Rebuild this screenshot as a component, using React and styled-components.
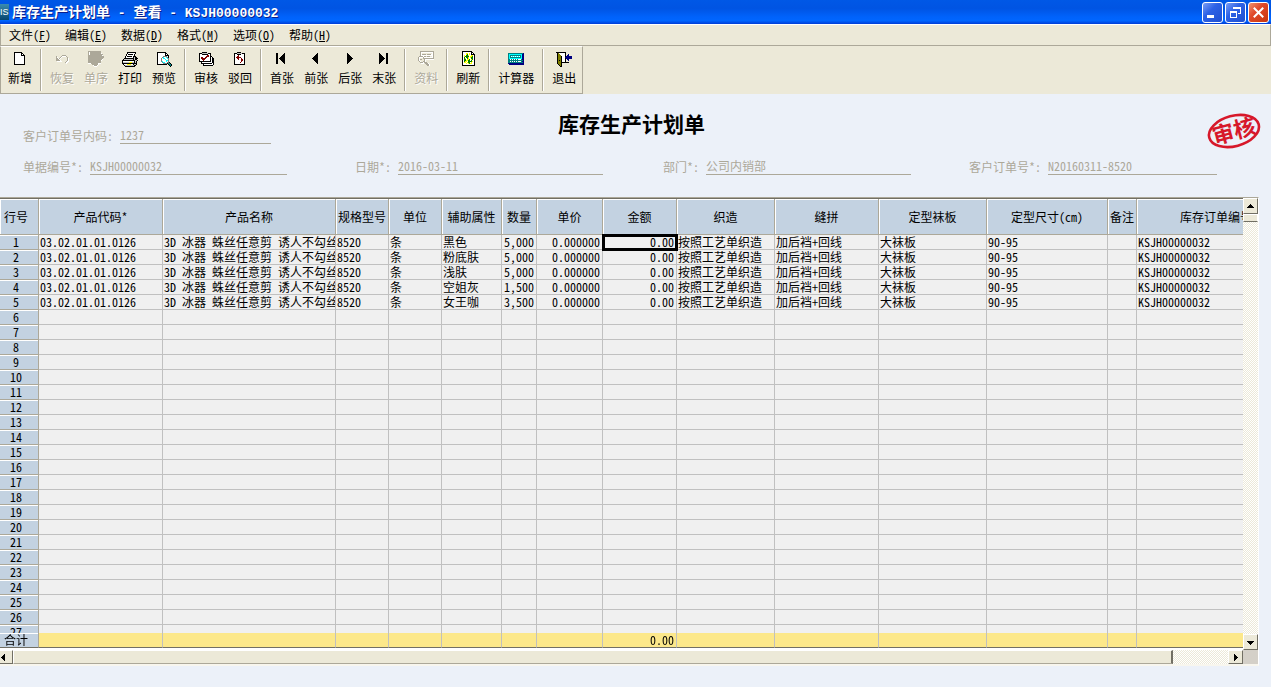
import React from 'react';
import styled, { createGlobalStyle } from 'styled-components';

const GlobalStyle = createGlobalStyle`
    * {
        box-sizing: border-box;
    }
    body {
        margin: 0;
        background: #ecf1f9;
        color: #000;
        font-family: "Noto Sans Mono CJK SC", "Noto Sans CJK SC", "Liberation Mono", monospace;
        font-size: 12px;
        line-height: 15px;
    }
    button, input {
        font: inherit;
        color: inherit;
        padding: 0;
        border: 0;
        background: none;
    }
`;

// Colours used by the pixel icons, one letter each
const palette = {
    k: '#000000',
    w: '#ffffff',
    g: '#aca899',
    d: '#808080',
    s: '#c0c0c0',
    r: '#800000',
    y: '#ffff00',
    o: '#808000',
    t: '#008080',
    c: '#00ffff',
    n: '#008000',
    b: '#000080',
};

const icons = {
    new: [
        '................',
        '..kkkkkkkk......',
        '..kwwwwwwkk.....',
        '..kwwwwwwkwk....',
        '..kwwwwwwkkkk...',
        '..kwwwwwwwwwk...',
        '..kwwwwwwwwwk...',
        '..kwwwwwwwwwk...',
        '..kwwwwwwwwwk...',
        '..kwwwwwwwwwk...',
        '..kwwwwwwwwwk...',
        '..kwwwwwwwwwk...',
        '..kwwwwwwwwwk...',
        '..kkkkkkkkkkk...',
    ],
    undo: [
        '................',
        '................',
        '................',
        '................',
        '........gggg....',
        '..g....gwwwwg...',
        '..gw..gw.....g..',
        '..ggwgw......gw.',
        '..gggw.......gw.',
        '..ggggw......gw.',
        '...wwwww....gww.',
        '...........gww..',
        '............w...',
    ],
    order: [
        'ggggggggggggg...',
        'gwggggggggggg...',
        'gwgggggggggggw..',
        'gwggggggggggggg.',
        'ggggggggggggggw.',
        'gggggggggggggggg',
        'gggggggggggggggg',
        'ggggggggggggggg.',
        'ggggggggggggggw.',
        'gggggggggggggw..',
        'ggggggggggggg...',
        'ggggggggggggg...',
        'wwwgggggggwww...',
        '....ggggggw.....',
        '.....wgggw......',
        '......www.......',
    ],
    print: [
        '................',
        '.....kkkkkkkkk..',
        '.....kwwwwwwwk..',
        '....kwkkkkkwk...',
        '....kwwwwwwwk...',
        '...kwkkkkkwkkk..',
        '...kwwwwwwwkskk.',
        '..kkkkkkkkkkskkk',
        '.kssssssssskskk.',
        'kkkkkkkkkkkkkssk',
        'kwwwwwwwwwwwksk.',
        'kssssssyyyssksk.',
        'kkkkkkkkkkkkkkk.',
        '.kwwwyyyywwkssk.',
        '..kssssssssskk..',
        '...kkkkkkkkkk...',
    ],
    preview: [
        '................',
        '.kkkkkkkkk......',
        '.kwwwwwwwkk.....',
        '.kwwwwwwwkwk....',
        '.kwwwwwwwkkkk...',
        '.kwwwwwddddwk...',
        '.kwwwwdcwwcdk...',
        '.kwwwdwccwwcd...',
        '.kwwwdwwwcwwd...',
        '.kwwwdwwwwccd...',
        '.kwwwdcwwwcwd...',
        '.kwwwwdccwwddk..',
        '.kwwwwwddddkttk.',
        '.kkkkkkkkkk.kttk',
        '.............ktk',
        '..............k.',
    ],
    audit: [
        '................',
        '....kkkkk.......',
        '.kkksssssskkk...',
        '.kwwkkkkkkwwk...',
        '.kwwwwwwwrrwk...',
        '.kwwwwwwrrrwkk..',
        '.kwrrwwrrwwwkwk.',
        '.kwrrrrrwwwwkwkk',
        '.kwwrrrwwwwwkwkk',
        '.kwwwrwwwwwwkwkk',
        '.kkkkkkkkkkkkwkk',
        '...kwwwwwwwwwwkk',
        '...kkkkkkkkkkkwk',
        '.....kwwwwwwwwwk',
        '.....kkkkkkkkkk.',
    ],
    reject: [
        '................',
        '.....kkkk.......',
        '..kkkssssskkk...',
        '..kwwkkkkwwwk...',
        '..kwwwrwwwwwk...',
        '..kwwrrwwwwwk...',
        '..kwrrrrrwwwk...',
        '..kwwrrwwrwwk...',
        '..kwwwrwwrrwk...',
        '..kwwwwwwrrwk...',
        '..kwwwwwwrwwk...',
        '..kwwwwwrwwwk...',
        '..kwwwwwwwwwk...',
        '..kkkkkkkkkkk...',
    ],
    first: [
        '................',
        '................',
        '..kk......k.....',
        '..kk.....kk.....',
        '..kk....kkk.....',
        '..kk...kkkk.....',
        '..kk..kkkkk.....',
        '..kk.kkkkkk.....',
        '..kk..kkkkk.....',
        '..kk...kkkk.....',
        '..kk....kkk.....',
        '..kk.....kk.....',
        '..kk......k.....',
    ],
    prev: [
        '................',
        '................',
        '.........k......',
        '........kk......',
        '.......kkk......',
        '......kkkk......',
        '.....kkkkk......',
        '....kkkkkk......',
        '.....kkkkk......',
        '......kkkk......',
        '.......kkk......',
        '........kk......',
        '.........k......',
    ],
    next: [
        '................',
        '................',
        '.....k..........',
        '.....kk.........',
        '.....kkk........',
        '.....kkkk.......',
        '.....kkkkk......',
        '.....kkkkkk.....',
        '.....kkkkk......',
        '.....kkkk.......',
        '.....kkk........',
        '.....kk.........',
        '.....k..........',
    ],
    last: [
        '................',
        '................',
        '...k......kk....',
        '...kk.....kk....',
        '...kkk....kk....',
        '...kkkk...kk....',
        '...kkkkk..kk....',
        '...kkkkkk.kk....',
        '...kkkkk..kk....',
        '...kkkk...kk....',
        '...kkk....kk....',
        '...kk.....kk....',
        '...k......kk....',
    ],
    data: [
        '..gggggggggggggg',
        '..gwwwwwwwwwwwwg',
        '..gw..........wg',
        '..gwgggg.ggggwwg',
        '..gwwwwwwwwwwwwg',
        '.ggggwgg.ggg..wg',
        'gwwwwgwwwwwwwwwg',
        'gw...ggggggggggg',
        'gwgg..gwwwwwwwww',
        'gw....gw........',
        '.gw..ggw........',
        '..gggwggg.......',
        '...www.gggw.....',
        '........gggw....',
        '.........ggw....',
    ],
    refresh: [
        '..kkkkkkkkkk....',
        '..kwwwwwwwwkk...',
        '..kwwwyywywkwk..',
        '..kwwwynwywkkkk.',
        '..kwywnnywwyywk.',
        '..kwynnnnwyynwk.',
        '..kwnwnnywynnwk.',
        '..kwnywnywwnnwk.',
        '..kwnnwyynwynwk.',
        '..kwnnyynnwnwwk.',
        '..kwnyywnnnnywk.',
        '..kwyywynnwywwk.',
        '..kwwwywynyywwk.',
        '..kwwwwwwwwwwwk.',
        '..kkkkkkkkkkkkk.',
    ],
    calc: [
        '................',
        '................',
        'tttttttttttttttb',
        'tcccccccccccccbb',
        'tctttttttttttcbb',
        'tctwcwcwcwcwtcbb',
        'tctttttttttttcbb',
        'tcccccccccccccbb',
        'ttwtwtwtwtwwwtbb',
        'tttttttttttttttb',
        'ttwtwtwtwtwwwtbb',
        'tttttttttttttttb',
        'bbbbbbbbbbbbbbbb',
        '.bbbbbbbbbbbbbbb',
    ],
    exit: [
        '................',
        'kkkkkkkkkk......',
        '.kowwwwwwk......',
        '.koowwwwwk..b...',
        '.kooowwwwk.bb...',
        '.koookwwwkbbbbbb',
        '.koookwwwbbbbbbb',
        '.koookwwwkbbbbbb',
        '.koookwwwk.bb...',
        '.kokokwwwk..b...',
        '.koookwwwk......',
        '.koookkkkkkkk...',
        '.koook..........',
        '..kook..........',
        '...kok..........',
        '....kk..........',
    ],
};

const menus = [
    ['文件', 'F'],
    ['编辑', 'E'],
    ['数据', 'D'],
    ['格式', 'M'],
    ['选项', 'O'],
    ['帮助', 'H'],
];

const toolGroups = [
    [['new', '新增']],
    [['undo', '恢复', true], ['order', '单序', true], ['print', '打印'], ['preview', '预览']],
    [['audit', '审核'], ['reject', '驳回']],
    [['first', '首张'], ['prev', '前张'], ['next', '后张'], ['last', '末张']],
    [['data', '资料', true]],
    [['refresh', '刷新']],
    [['calc', '计算器']],
    [['exit', '退出']],
];

const columns = [
    { title: '产品代码*', width: 124 },
    { title: '产品名称', width: 173, clip: true },
    { title: '规格型号', width: 53 },
    { title: '单位', width: 53 },
    { title: '辅助属性', width: 60 },
    { title: '数量', width: 35, right: true },
    { title: '单价', width: 66, right: true },
    { title: '金额', width: 74, right: true },
    { title: '织造', width: 98 },
    { title: '缝拼', width: 104 },
    { title: '定型袜板', width: 108 },
    { title: '定型尺寸(cm)', width: 121 },
    { title: '备注', width: 29 },
    { title: '库存订单编号', width: 159 },
];

const makeRow = (color, count) => [
    '03.02.01.01.0126',
    '3D 冰器 蛛丝任意剪 诱人不勾丝',
    '8520',
    '条',
    color,
    count,
    '0.000000',
    '0.00',
    '按照工艺单织造',
    '加后裆+回线',
    '大袜板',
    '90-95',
    '',
    'KSJH00000032',
];

const rows = [
    makeRow('黑色', '5,000'),
    makeRow('粉底肤', '5,000'),
    makeRow('浅肤', '5,000'),
    makeRow('空姐灰', '1,500'),
    makeRow('女王咖', '3,500'),
];

const ROW_COUNT = 27;
const AMOUNT = 7;

const PixelIcon = ({ name }) => (
    <svg width="16" height="16" viewBox="0 0 16 16" shapeRendering="crispEdges" aria-hidden="true">
        {icons[name].map((line, y) =>
            line.split('').map((ch, x) =>
                ch === '.' ? null : <rect key={x + '-' + y} x={x} y={y} width="1" height="1" fill={palette[ch]} />
            )
        )}
    </svg>
);

const Arrow = ({ points }) => (
    <svg width="7" height="7" viewBox="0 0 7 7" shapeRendering="crispEdges" aria-hidden="true">
        <polygon points={points} fill="#000" />
    </svg>
);

const TitleBar = () => (
    <TitleBarBox>
        <AppIcon>IS</AppIcon>
        <Caption>
            库存生产计划单<CaptionCode> - </CaptionCode>查看<CaptionCode> - KSJH00000032</CaptionCode>
        </Caption>
        <WindowButton aria-label="最小化">
            <svg width="19" height="19" shapeRendering="crispEdges">
                <rect x="4" y="12" width="7" height="3" fill="#fff" />
            </svg>
        </WindowButton>
        <WindowButton aria-label="还原">
            <svg width="19" height="19" shapeRendering="crispEdges" fill="none" stroke="#fff">
                <path d="M7 4.5h8M7.5 6V4M14.5 4v7M7 5.5h8M12 10.5h3M4 8.5h7M4 9.5h7M4.5 8v7M10.5 8v7M4 14.5h7" />
            </svg>
        </WindowButton>
        <WindowButton $close aria-label="关闭">
            <svg width="19" height="19" stroke="#fff" strokeWidth="2" strokeLinecap="square">
                <path d="M5.5 5.5l8 8M13.5 5.5l-8 8" />
            </svg>
        </WindowButton>
    </TitleBarBox>
);

const Field = ({ id, label, value, gap }) => (
    <FieldBox $gap={gap}>
        <label htmlFor={id}>{label}:</label>
        <FieldInput id={id} defaultValue={value} readOnly />
    </FieldBox>
);

const Grid = () => (
    <Table>
        <colgroup>
            <col width="39" />
            {columns.map((c) => <col key={c.title} width={c.width} />)}
        </colgroup>
        <thead>
            <tr>
                <HeadCell $index scope="col">行号</HeadCell>
                {columns.map((c) => <HeadCell key={c.title} scope="col">{c.title}</HeadCell>)}
            </tr>
        </thead>
        <tbody>
            {Array.from({ length: ROW_COUNT }, (_, r) => (
                <tr key={r}>
                    <IndexCell scope="row">{r + 1}</IndexCell>
                    {columns.map((c, i) => (
                        <Cell key={c.title} $right={c.right} $clip={c.clip} $selected={r === 0 && i === AMOUNT}>
                            {rows[r] ? rows[r][i] : ''}
                        </Cell>
                    ))}
                </tr>
            ))}
        </tbody>
        <tfoot>
            <tr>
                <TotalHead scope="row">合计</TotalHead>
                {columns.map((c, i) => (
                    <TotalCell key={c.title} $right={c.right}>{i === AMOUNT ? '0.00' : ''}</TotalCell>
                ))}
            </tr>
        </tfoot>
    </Table>
);

const App = () => (
    <Window>
        <GlobalStyle />
        <TitleBar />
        <MenuBar>
            {menus.map(([text, key]) => (
                <MenuButton key={key}>{text}(<u>{key}</u>)</MenuButton>
            ))}
        </MenuBar>
        <ToolStrip>
            <ToolBar>
                {toolGroups.map((group, i) => (
                    <ToolGroup key={i}>
                        {group.map(([icon, text, disabled]) => (
                            <ToolButton key={icon} disabled={disabled}>
                                <PixelIcon name={icon} />
                                {text}
                            </ToolButton>
                        ))}
                    </ToolGroup>
                ))}
            </ToolBar>
        </ToolStrip>
        <Form>
            <TopRow>
                <Field id="inner" label="客户订单号内码" value="1237" gap={0} />
                <FormTitle>库存生产计划单</FormTitle>
                <Stamp viewBox="0 0 56 40" role="img" aria-label="审核">
                    <g transform="rotate(-15 28 20)">
                        <ellipse cx="28" cy="20" rx="25.6" ry="15.2" fill="none" stroke="#d7182a" strokeWidth="2.6" />
                        <text x="28" y="28" textAnchor="middle">审核</text>
                    </g>
                </Stamp>
            </TopRow>
            <FieldRow>
                <Field id="bill" label="单据编号*" value="KSJH00000032" gap={68} />
                <Field id="date" label="日期*" value="2016-03-11" gap={60} />
                <Field id="dept" label="部门*" value="公司内销部" gap={58} />
                <Field id="order" label="客户订单号*" value="N20160311-8520" gap={54} />
            </FieldRow>
        </Form>
        <GridFrame>
            <GridView>
                <Grid />
            </GridView>
            <VScroll>
                <ScrollButton aria-label="向上"><Arrow points="0,5 7,5 3.5,1" /></ScrollButton>
                <VThumb />
                <Track />
                <ScrollButton aria-label="向下"><Arrow points="0,2 7,2 3.5,6" /></ScrollButton>
            </VScroll>
            <HScroll>
                <ScrollButton $left aria-label="向左"><Arrow points="5,0 5,7 1,3.5" /></ScrollButton>
                <HThumb />
                <Track />
                <ScrollButton aria-label="向右"><Arrow points="2,0 2,7 6,3.5" /></ScrollButton>
            </HScroll>
            <Corner />
        </GridFrame>
    </Window>
);

export default App;

const Window = styled.div`
    display: flex;
    flex-direction: column;
    height: 100vh;
    overflow: hidden;
`;

// Title bar
const TitleBarBox = styled.header`
    display: flex;
    align-items: center;
    gap: 2px;
    height: 24px;
    padding-right: 2px;
    color: #fff;
    background: linear-gradient(#0058e6 0, #0054e3 35%, #0062fb 70%, #0066ff 86%, #003dd7 100%);
`;

const AppIcon = styled.span`
    width: 9px;
    height: 16px;
    font-family: "Liberation Sans", sans-serif;
    font-size: 9px;
    line-height: 16px;
    background: linear-gradient(#3b8cb0, #07456e);
`;

const Caption = styled.h1`
    flex: 1;
    margin: 0;
    padding-left: 1px;
    font-size: 14px;
    font-weight: 700;
    line-height: 20px;
    text-shadow: 1px 1px #0a1f8c;
    white-space: pre;
`;

const CaptionCode = styled.span`
    font-family: "Liberation Mono", monospace;
    font-size: 13px;
`;

const WindowButton = styled.button`
    width: 21px;
    height: 21px;
    border: 1px solid #fff;
    border-radius: 3px;
    background: ${props => props.$close
        ? 'linear-gradient(135deg, #f0936f, #e0492a 40%, #c8370e)'
        : 'linear-gradient(135deg, #7a9df5, #2d62e6 40%, #1f4fd0)'};

    svg {
        display: block;
    }
`;

// Menu
const MenuBar = styled.nav`
    display: flex;
    gap: 14px;
    height: 22px;
    padding-left: 8px;
    background: #ece9d8;
    border: 1px solid #aca899;
    border-top-color: #fff;
`;

const MenuButton = styled.button`
    width: 42px;
    line-height: 18px;
    white-space: nowrap;
`;

// Tool bar
const ToolStrip = styled.div`
    display: flex;
    background: #ece9d8;
`;

const ToolBar = styled.div`
    display: flex;
    height: 48px;
    padding: 2px 2px 2px 1px;
    border: 1px solid #aca899;
    border-top-color: #fff;
`;

const ToolGroup = styled.div`
    display: flex;

    & + & {
        margin-left: 4px;
        padding-left: 3px;
        border-left: 1px solid #aca899;
        box-shadow: inset 1px 0 #fff;
    }
`;

const ToolButton = styled.button`
    display: flex;
    flex-direction: column;
    align-items: center;
    gap: 3px;
    min-width: 34px;
    padding: 2px 4px 0 6px;
    white-space: nowrap;

    &:disabled {
        color: #aca899;
        text-shadow: 1px 1px #fff;
    }
`;

// Form
const Form = styled.form`
    padding: 16px 0 22px 23px;
    color: #aca899;
`;

const TopRow = styled.div`
    display: grid;
    grid-template-columns: 248px 1fr 270px;
    align-items: center;
    margin-bottom: 6px;
    padding: 1px 9px 0 0;
`;

const FormTitle = styled.h2`
    align-self: start;
    margin: 0;
    color: #000;
    font-size: 21px;
    font-weight: 700;
    line-height: 24px;
    text-align: center;
`;

const Stamp = styled.svg`
    justify-self: end;
    width: 56px;
    height: 40px;
    overflow: visible;

    text {
        fill: #d7182a;
        font-size: 22px;
        font-weight: 700;
    }
`;

const FieldRow = styled.div`
    display: grid;
    grid-template-columns: 332fr 308fr 306fr 302fr;
`;

const FieldBox = styled.div`
    display: flex;
    align-items: center;
    align-self: end;
    gap: 7px;
    min-width: 0;
    height: 18px;
    padding-right: ${props => props.$gap}px;
    white-space: nowrap;

    ${TopRow} & {
        margin-bottom: 7px;
    }
`;

const FieldInput = styled.input`
    flex: 1;
    min-width: 0;
    height: 17px;
    border-bottom: 1px solid #aca899;
    outline: 0;
`;

// Grid
const GridFrame = styled.main`
    flex: 1;
    display: grid;
    grid-template: minmax(0, 1fr) 14px / minmax(0, 1fr) 15px;
    min-height: 0;
    margin: 0 12px 21px 0;
    border-top: 1px solid #aca899;
    border-right: 1px solid #fff;
    border-bottom: 2px solid #f8f6ee;
`;

const GridView = styled.div`
    overflow: hidden;
    border-top: 1px solid #716f64;
    border-bottom: 2px solid #fff;
    background: #f0f0f0;
`;

const Table = styled.table`
    width: 1296px;
    table-layout: fixed;
    border-collapse: separate;
    border-spacing: 0;

    tfoot {
        position: sticky;
        bottom: 0;
        z-index: 1;
    }
`;

const HeadCell = styled.th`
    height: 36px;
    padding: ${props => props.$index ? '0 6px 0 0' : '0'};
    font-weight: 400;
    white-space: nowrap;
    background: #c3d2e1;
    border-right: 1px solid #aca899;
    border-bottom: 1px solid #aca899;
    box-shadow: inset 1px 1px #fff;
`;

const IndexCell = styled.th`
    height: 15px;
    padding: 0 6px 0 0;
    font-weight: 400;
    line-height: 14px;
    background: #c3d2e1;
    border-right: 1px solid #aca899;
    border-bottom: 1px solid #aca899;
    box-shadow: inset 0 1px #fff;
`;

const Cell = styled.td`
    height: 15px;
    padding: 0 2px 0 1px;
    overflow: ${props => props.$clip ? 'hidden' : 'visible'};
    line-height: 14px;
    text-align: ${props => props.$right ? 'right' : 'left'};
    white-space: nowrap;
    border-right: 1px solid #c0c0c0;
    border-bottom: 1px solid #c0c0c0;
    outline: ${props => props.$selected ? '3px solid #000' : '0'};
    outline-offset: -2px;
`;

const TotalHead = styled(IndexCell)`
    border-bottom-color: #716f64;
`;

const TotalCell = styled(Cell)`
    background: #fce88a;
    border-bottom-color: #716f64;
`;

// Scroll bars
const ScrollButton = styled.button`
    display: flex;
    flex: none;
    align-items: center;
    justify-content: ${props => props.$left ? 'flex-start' : 'center'};
    width: ${props => props.$left ? '13px' : '15px'};
    height: 100%;
    max-height: 16px;
    background: #ece9d8;
    border: 1px solid #fff;
    border-left-width: ${props => props.$left ? '0' : '1px'};
    border-right-color: #716f64;
    border-bottom-color: #716f64;
`;

const VScroll = styled.div`
    display: flex;
    flex-direction: column;
`;

const HScroll = styled.div`
    display: flex;
    min-width: 0;
`;

const Track = styled.div`
    flex: 1;
    background: repeating-conic-gradient(#fff 0 25%, #ece9d8 0 50%) 0 0 / 2px 2px;
`;

const VThumb = styled.div`
    height: 8px;
    background: #ece9d8;
    border: 1px solid #fff;
    border-bottom-color: #716f64;
`;

const HThumb = styled.div`
    flex: 21;
    background: #ece9d8;
    border: 1px solid #fff;
    border-right: 2px solid #716f64;
    border-bottom-color: #aca899;
`;

const Corner = styled.div`
    background: #d4d0c8;
`;
